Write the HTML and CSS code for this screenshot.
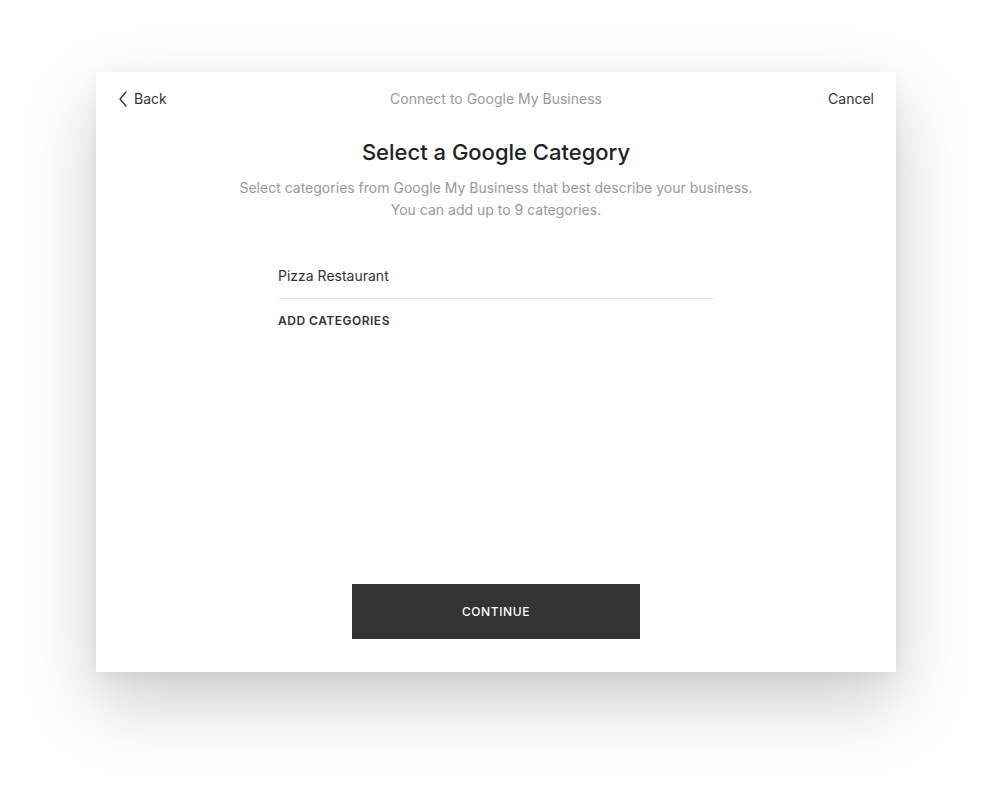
FILE: index.html
```
<!DOCTYPE html>
<html lang="en">
<head>
<meta charset="utf-8">
<title>Select a Google Category</title>
<link rel="stylesheet" href="styles.css">
</head>
<body>
<div class="page">
  <div class="modal">
    <div class="header">
      <a class="nav back" href="#">
        <svg class="chev" width="10" height="16" viewBox="0 0 10 16" aria-hidden="true"><path d="M8 1 L2 8 L8 15" fill="none" stroke="#333" stroke-width="1.4" stroke-linecap="round" stroke-linejoin="round"/></svg>
        <span>Back</span>
      </a>
      <div class="htitle">Connect to Google My Business</div>
      <a class="nav cancel" href="#">Cancel</a>
    </div>
    <div class="body">
      <h1 class="title">Select a Google Category</h1>
      <p class="sub">Select categories from Google My Business that best describe your business.<br>You can add up to 9 categories.</p>
      <div class="list">
        <div class="item">Pizza Restaurant</div>
        <a class="add" href="#">ADD CATEGORIES</a>
      </div>
    </div>
    <div class="footer">
      <button class="cta" type="button">CONTINUE</button>
    </div>
  </div>
</div>
</body>
</html>
```
FILE: styles.css
```
html, body {
  margin: 0;
  padding: 0;
  background: #ffffff;
}
body {
  font-family: Inter, "Liberation Sans", Arial, sans-serif;
  color: #333;
  -webkit-font-smoothing: antialiased;
}
.page {
  width: 992px;
  height: 792px;
  padding-top: 72px;
  box-sizing: border-box;
  overflow: hidden;
}
.modal {
  width: 800px;
  height: 600px;
  margin: 0 auto;
  background: #fff;
  box-shadow: 0 30px 70px rgba(0, 0, 0, 0.2), 0 4px 14px rgba(0, 0, 0, 0.06);
  display: flex;
  flex-direction: column;
}
.header {
  height: 54px;
  padding: 0 22px 1px;
  box-sizing: border-box;
  display: flex;
  align-items: center;
  justify-content: space-between;
  font-size: 14px;
}
.nav {
  color: #333;
  text-decoration: none;
  display: flex;
  align-items: center;
  gap: 6px;
  width: 120px;
}
.cancel {
  justify-content: flex-end;
}
.chev {
  display: block;
}
.htitle {
  color: #999;
  text-align: center;
  flex: 1;
}
.body {
  display: flex;
  flex-direction: column;
  align-items: center;
  margin-top: 12px;
}
.title {
  margin: 0;
  font-size: 22px;
  line-height: 28px;
  font-weight: 500;
  color: #222;
  letter-spacing: 0;
}
.sub {
  margin: 11px 0 0;
  font-size: 14px;
  line-height: 22px;
  color: #999;
  text-align: center;
}
.list {
  width: 436px;
  margin-top: 45px;
}
.item {
  font-size: 14px;
  line-height: 20px;
  color: #333;
  padding-bottom: 12px;
  border-bottom: 1px solid #e8e8e8;
}
.add {
  display: block;
  margin-top: 14px;
  font-size: 12px;
  line-height: 16px;
  font-weight: 600;
  letter-spacing: 0.5px;
  color: #333;
  text-decoration: none;
}
.footer {
  margin-top: auto;
  padding-bottom: 33px;
  display: flex;
  justify-content: center;
}
.cta {
  width: 288px;
  height: 55px;
  border: 0;
  background: #333;
  color: #fff;
  font-family: inherit;
  font-size: 12px;
  font-weight: 500;
  letter-spacing: 0.6px;
  cursor: pointer;
}
```
